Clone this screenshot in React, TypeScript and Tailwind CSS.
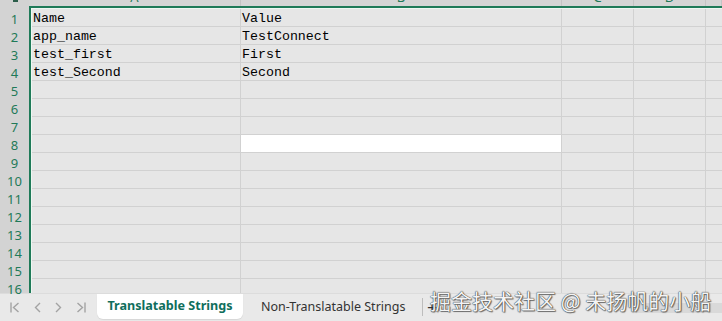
import React from "react";

const rows: [string, string][] = [
  ["Name", "Value"],
  ["app_name", "TestConnect"],
  ["test_first", "First"],
  ["test_Second", "Second"],
];

const Cell = ({ w, children, white }: { w: string; children?: React.ReactNode; white?: boolean }) => (
  <div
    className={`${w} shrink-0 h-full border-r border-[#d1d1d1] pl-[1px] pt-[3px] flex items-center overflow-hidden whitespace-nowrap ${
      white ? "bg-white" : ""
    }`}
  >
    {children}
  </div>
);

export default function App() {
  const nums = Array.from({ length: 16 }, (_, i) => i + 1);

  return (
    <div className="relative w-[722px] h-[321px] overflow-hidden bg-[#e6e6e6] font-['Noto_Sans',sans-serif]">
      <div className="flex h-[293px]">
        {/* row header */}
        <div className="w-[29px] shrink-0 flex flex-col bg-[#d3d3d3]">
          <div className="h-[9px] shrink-0 relative">
            <div className="absolute left-[13px] top-0 w-[5px] h-[2px] bg-[#2b5d4a]" />
          </div>
          {nums.map((n) => (
            <div
              key={n}
              className="h-[18px] shrink-0 flex items-center justify-center pt-[2px] text-[13px] leading-none text-[#1f7a58]"
            >
              {n}
            </div>
          ))}
        </div>

        <div className="flex-1 flex flex-col min-w-0">
          {/* column header, mostly scrolled out of view */}
          <div className="h-[6px] shrink-0 flex items-end overflow-hidden bg-[#d5d5d5] text-[13px] text-[#1f7a58]">
            {[
              ["w-[212px]", "A"],
              ["w-[321px]", "B"],
              ["w-[72px]", "C"],
              ["w-[72px]", "D"],
              ["flex-1", ""],
            ].map(([w, l], i) => (
              <div key={i} className={`${w} shrink-0 h-full flex items-end justify-center border-r border-[#c4c4c4]`}>
                <span className="leading-[18px]">{l}</span>
              </div>
            ))}
          </div>

          {/* selected sheet body */}
          <div className="flex-1 border-t-2 border-l-2 border-[#1f7a58] overflow-hidden">
            <div className="h-full border-t border-l border-[#eef7f2] flex flex-col font-['Liberation_Mono',monospace] text-[13.3px] text-black">
              {nums.map((n) => {
                const r = rows[n - 1];
                return (
                  <div key={n} className="h-[18px] shrink-0 flex border-b border-[#d1d1d1]">
                    <Cell w="w-[209px]">{r ? r[0] : null}</Cell>
                    <Cell w="w-[321px]" white={n === 8}>
                      {r ? r[1] : null}
                    </Cell>
                    <Cell w="w-[72px]" />
                    <Cell w="w-[72px]" />
                    <div className="flex-1" />
                  </div>
                );
              })}
            </div>
          </div>
        </div>
      </div>

      {/* sheet tabs */}
      <div className="h-[28px] flex items-start bg-[#e9e9e9] border-t border-[#dcdcdc]">
        <div className="w-[97px] h-[26px] flex items-center gap-[14px] pl-[10px] text-[#a3a3a3]">
          <svg width="10" height="11" viewBox="0 0 10 11" fill="none" stroke="currentColor" strokeWidth="1.4">
            <path d="M1 0.5v10M8.5 1L3.5 5.5l5 4.5" />
          </svg>
          <svg width="7" height="11" viewBox="0 0 7 11" fill="none" stroke="currentColor" strokeWidth="1.4">
            <path d="M6 1L1.5 5.5 6 10" />
          </svg>
          <svg width="7" height="11" viewBox="0 0 7 11" fill="none" stroke="currentColor" strokeWidth="1.4">
            <path d="M1 1l4.5 4.5L1 10" />
          </svg>
          <svg width="10" height="11" viewBox="0 0 10 11" fill="none" stroke="currentColor" strokeWidth="1.4">
            <path d="M1.5 1l5 4.5-5 4.5M9 0.5v10" />
          </svg>
        </div>
        <div className="w-[146px] h-[25px] flex items-center justify-center bg-white rounded-b-[6px] text-[12.6px] font-bold text-[#0f6e5c] shadow-[0_1px_1px_rgba(0,0,0,0.08)]">
          Translatable Strings
        </div>
        <div className="w-[179px] h-[26px] flex items-center pl-[18px] text-[12.5px] text-[#333]">
          Non-Translatable Strings
        </div>
        <div className="w-px h-[18px] mt-[4px] bg-[#bdbdbd]" />
        <div className="ml-[4px] h-[26px] flex items-center text-[18px] leading-none text-[#333]">+</div>
        <div className="ml-auto mt-[9px] w-[88px] h-[10px] bg-[#d9d9d9]" />
      </div>

      {/* watermark */}
      <div className="absolute left-[430px] top-[285px] text-[21px] leading-[30px] whitespace-nowrap text-[#f4f4f4] font-['Noto_Sans_CJK_SC',sans-serif] [text-shadow:0_0_1px_#333,0_0_1px_#333,1px_1px_1px_#777]">
        掘金技术社区 @ 未扬帆的小船
      </div>
    </div>
  );
}
